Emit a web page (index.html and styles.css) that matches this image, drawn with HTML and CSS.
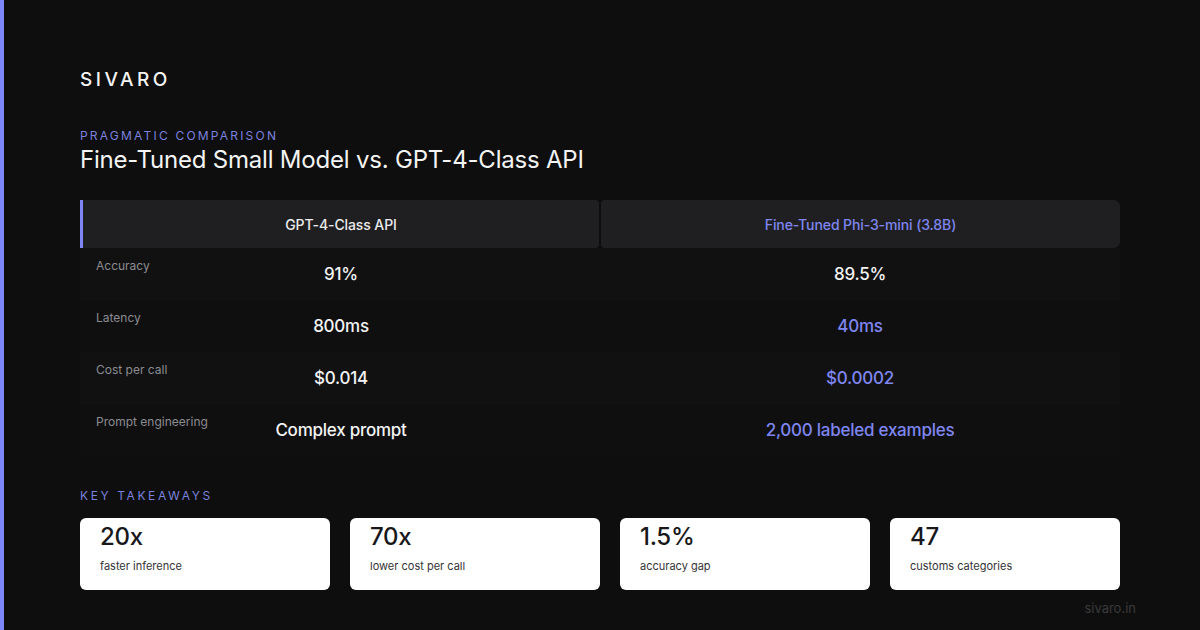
FILE: index.html
```html
<!DOCTYPE html>
<html lang="en">
<head>
<meta charset="utf-8">
<title>Sivaro - Pragmatic Comparison</title>
<link rel="stylesheet" href="styles.css">
</head>
<body>
<div class="page">
  <div class="brand">SIVARO</div>
  <div class="eyebrow">PRAGMATIC COMPARISON</div>
  <h1 class="title">Fine-Tuned Small Model vs. GPT-4-Class API</h1>

  <div class="table">
    <div class="thead">
      <div class="th th-left">GPT-4-Class API</div>
      <div class="th th-right">Fine-Tuned Phi-3-mini (3.8B)</div>
    </div>
    <div class="row">
      <div class="label">Accuracy</div>
      <div class="val v1">91%</div>
      <div class="val v2">89.5%</div>
    </div>
    <div class="row">
      <div class="label">Latency</div>
      <div class="val v1">800ms</div>
      <div class="val v2 accent">40ms</div>
    </div>
    <div class="row">
      <div class="label">Cost per call</div>
      <div class="val v1">$0.014</div>
      <div class="val v2 accent">$0.0002</div>
    </div>
    <div class="row">
      <div class="label">Prompt engineering</div>
      <div class="val v1">Complex prompt</div>
      <div class="val v2 accent">2,000 labeled examples</div>
    </div>
  </div>

  <div class="eyebrow takeaways-title">KEY TAKEAWAYS</div>
  <div class="cards">
    <div class="card"><div class="num">20x</div><div class="desc">faster inference</div></div>
    <div class="card"><div class="num">70x</div><div class="desc">lower cost per call</div></div>
    <div class="card"><div class="num">1.5%</div><div class="desc">accuracy gap</div></div>
    <div class="card"><div class="num">47</div><div class="desc">customs categories</div></div>
  </div>
  <div class="footer">sivaro.in</div>
</div>
</body>
</html>
```
FILE: styles.css
```css
html, body {
  margin: 0;
  padding: 0;
}
body {
  width: 1200px;
  height: 630px;
  background: #0e0e0e;
  font-family: Inter, "Noto Sans", sans-serif;
  color: #f2f2f2;
  overflow: hidden;
}
.page {
  box-sizing: border-box;
  height: 630px;
  border-left: 4px solid #7f86f5;
  padding: 68px 80px 0 76px;
}
.brand {
  font-size: 19px;
  font-weight: 500;
  letter-spacing: 3.5px;
  line-height: 24px;
  color: #f4f4f4;
}
.eyebrow {
  margin-top: 36px;
  font-size: 12px;
  letter-spacing: 2.2px;
  line-height: 16px;
  color: #7c82de;
}
.title {
  margin: 0;
  font-size: 24px;
  font-weight: 400;
  letter-spacing: -0.2px;
  line-height: 32px;
  color: #f4f4f4;
}
.table {
  margin-top: 24px;
  background: #111112;
}
.thead {
  display: grid;
  grid-template-columns: 1fr 1fr;
  gap: 2px;
  background: #0e0e0e;
}
.th {
  height: 48px;
  display: flex;
  align-items: center;
  justify-content: center;
  background: #1f1f22;
  font-size: 14px;
  font-weight: 500;
  letter-spacing: -0.1px;
  border-radius: 4px;
}
.th-left {
  border-left: 3px solid #7f86f5;
  border-radius: 0 4px 4px 0;
  color: #ececec;
}
.th-right {
  color: #7f86f0;
  border-radius: 4px 6px 6px 4px;
}
.row {
  display: grid;
  grid-template-columns: 1fr 1fr;
  height: 52px;
}
.row:nth-child(odd) {
  background: #0f0f10;
}
.label {
  grid-area: 1 / 1;
  justify-self: start;
  align-self: start;
  padding: 10px 0 0 16px;
  font-size: 12px;
  line-height: 16px;
  color: #8c8c90;
}
.val {
  align-self: center;
  justify-self: center;
  font-size: 17px;
  font-weight: 500;
  letter-spacing: -0.25px;
  color: #f4f4f4;
}
.v1 {
  grid-area: 1 / 1;
  padding-left: 2px;
}
.v2 {
  grid-area: 1 / 2;
}
.accent {
  color: #7f86f0;
}
.takeaways-title {
  margin-top: 32px;
  letter-spacing: 2.6px;
}
.cards {
  margin-top: 14px;
  display: grid;
  grid-template-columns: 250px 250px 250px 1fr;
  gap: 20px;
}
.card {
  background: #ffffff;
  border-radius: 6px;
  height: 72px;
  box-sizing: border-box;
  padding: 3px 20px 0;
}
.num {
  font-size: 24px;
  font-weight: 500;
  line-height: 32px;
  color: #18181a;
  letter-spacing: -0.3px;
}
.desc {
  margin-top: 6px;
  font-size: 11px;
  line-height: 14px;
  color: #333336;
}
.footer {
  margin-top: 10px;
  text-align: right;
  margin-right: -16px;
  font-size: 13px;
  color: #3a3a3c;
}
```
